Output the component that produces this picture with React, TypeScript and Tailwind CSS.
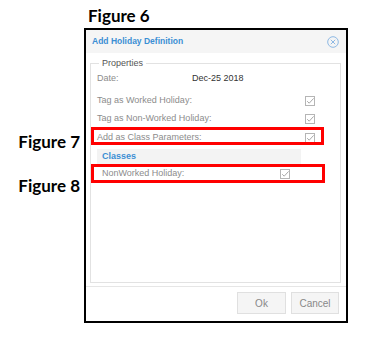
import React from "react";

function Check() {
  return (
    <svg width="10" height="10" viewBox="0 0 10 10" className="shrink-0">
      <rect x="0.5" y="0.5" width="9" height="9" fill="none" stroke="#b5b5b5" />
      <path d="M2.2 5.2 L4.2 7.2 L8.6 2.4" fill="none" stroke="#a8a8a8" strokeWidth="1" />
    </svg>
  );
}

function Row({ label, h = "h-[18px]" }: { label: string; h?: string }) {
  return (
    <div className={`flex ${h} items-center justify-between pr-[25px]`}>
      <span>{label}</span>
      <Check />
    </div>
  );
}

export default function App() {
  const fig = "font-['Lato',sans-serif] font-bold text-[17px] text-black leading-none";
  return (
    <div className="relative h-[341px] w-[374px] bg-white font-['Liberation_Sans',Arial,sans-serif]">
      <div className={`${fig} pl-[88px] pt-[7px] h-[28px]`}>Figure 6</div>

      <div className="ml-[84px] flex h-[295px] w-[264px] flex-col border-2 border-black bg-white">
        <div className="flex h-[23px] items-center justify-between bg-[#f5f5f5] pl-[6px] pr-[7px]">
          <span className="text-[8.5px] font-bold text-[#3b8fd4]">Add Holiday Definition</span>
          <svg width="12" height="12" viewBox="0 0 12 12">
            <circle cx="6" cy="6" r="5.3" fill="none" stroke="#8db8e3" strokeWidth="1" />
            <path d="M3.8 3.8 L8.2 8.2 M8.2 3.8 L3.8 8.2" stroke="#8db8e3" strokeWidth="1" />
          </svg>
        </div>

        <div className="flex-1 pl-[4px] pr-[5px] pt-[5px]">
          <fieldset className="h-[225px] border border-[#e2e2e2] pl-[6px] pr-0 text-[9px] text-[#8c8c8c]">
            <legend className="ml-[2px] px-[3px] text-[9px] leading-[10px] text-[#555]">Properties</legend>
            <div className="mt-[2px] flex h-[18px] items-center">
              <span className="w-[95px]">Date:</span>
              <span className="text-[#333]">Dec-25 2018</span>
            </div>
            <div className="h-[4px]" />
            <Row label="Tag as Worked Holiday:" />
            <Row label="Tag as Non-Worked Holiday:" />
            <Row label="Add as Class Parameters:" h="h-[20px]" />
            <div className="mt-[1px] mr-[39px] flex h-[15px] items-center bg-[#f3f3f3] pl-[5px] text-[9px] font-bold text-[#3b8fd4]">
              Classes
            </div>
            <div className="flex h-[19px] items-center justify-between pl-[5px] pr-[50px]">
              <span>NonWorked Holiday:</span>
              <Check />
            </div>
          </fieldset>
        </div>

        <div className="flex h-[35px] items-center justify-end gap-[5px] border-t border-[#e6e6e6] pr-[7px] pb-[2px]">
          <button className="h-[22px] w-[49px] border border-[#e0e0e0] bg-[#f5f5f5] text-[10px] text-[#888]">Ok</button>
          <button className="h-[22px] w-[48px] border border-[#e0e0e0] bg-[#f5f5f5] text-[10px] text-[#888]">Cancel</button>
        </div>
      </div>

      <div className="absolute left-[91px] top-[127px] h-[18px] w-[233px] border-[3px] border-[#f00]" />
      <div className="absolute left-[91px] top-[164px] h-[19px] w-[234px] border-[3px] border-[#f00]" />
      <div className={`${fig} absolute right-[294px] top-[133px]`}>Figure 7</div>
      <div className={`${fig} absolute right-[294px] top-[177px]`}>Figure 8</div>
    </div>
  );
}
